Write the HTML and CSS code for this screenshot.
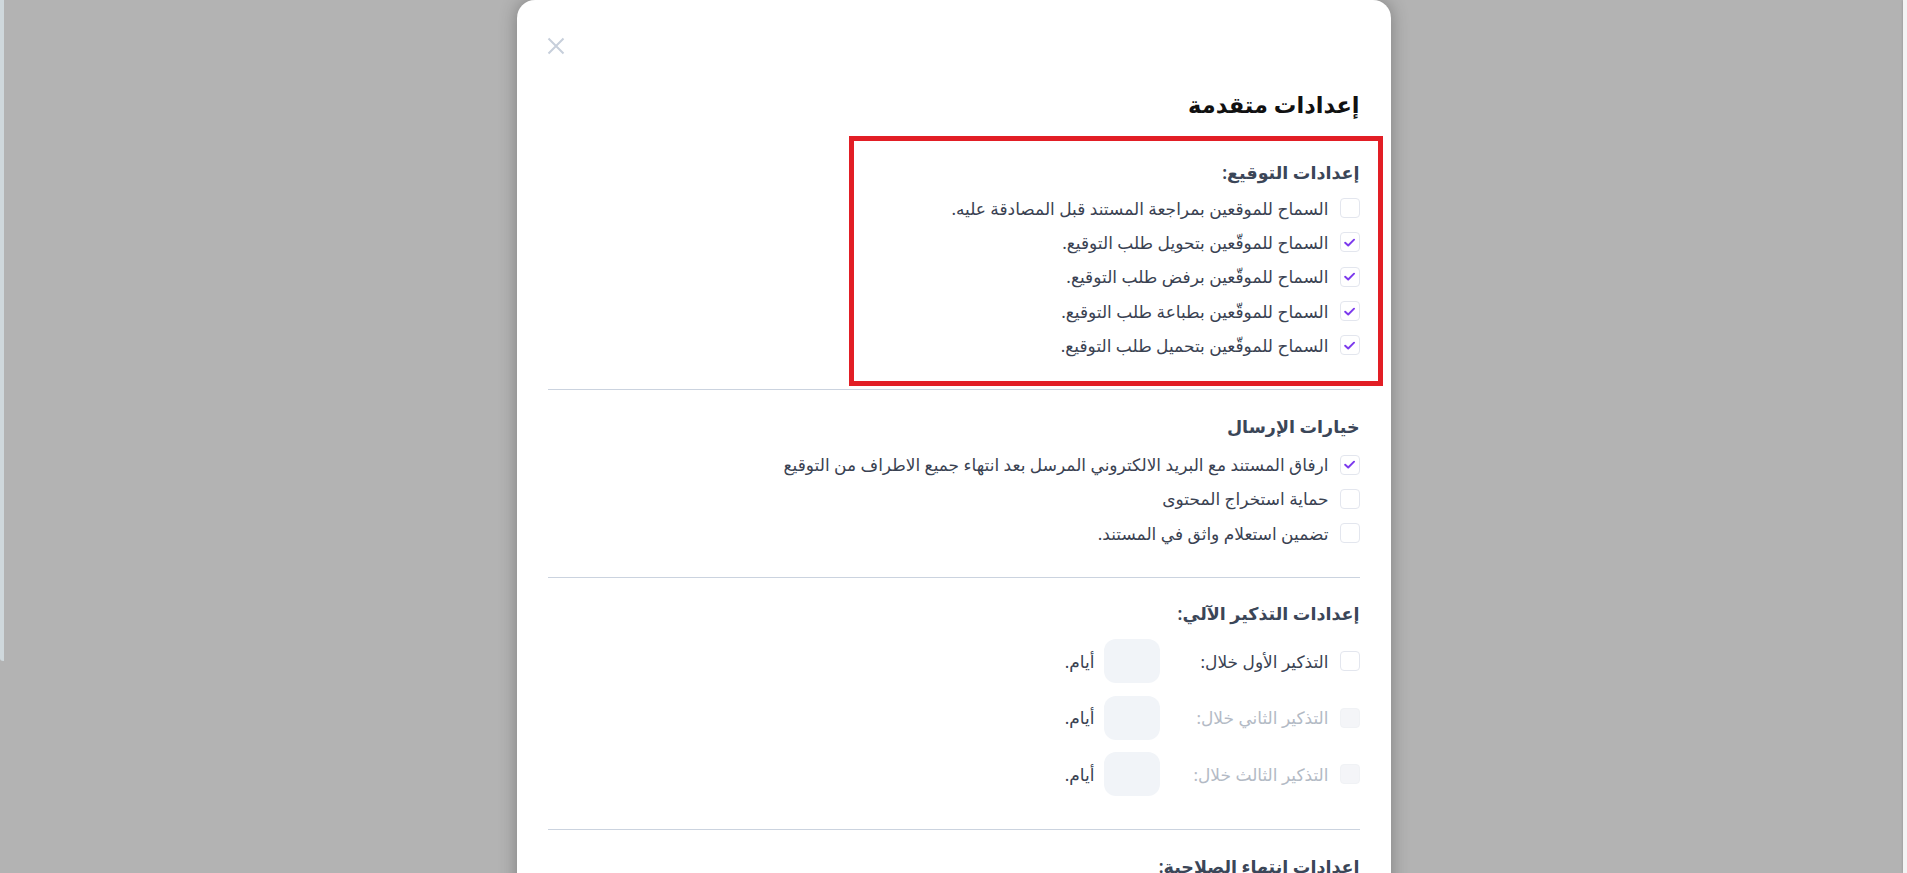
FILE: index.html
```html
<!DOCTYPE html>
<html lang="ar" dir="rtl">
<head>
  <meta charset="UTF-8" />
  <meta name="viewport" content="width=device-width, initial-scale=1.0"/>
  <title>إعدادات متقدمة</title>
  <link rel="stylesheet" href="styles.css">
</head>
<body>

<div class="backdrop">
  <div class="scroll-edge"></div>

  <div class="modal">
    <div class="modal-top">
      <button class="close" aria-label="إغلاق">
        <svg width="18" height="18" viewBox="0 0 18 18"><path d="M1.5 1.5l15 15M16.5 1.5l-15 15" stroke="#c7cfdb" stroke-width="2" fill="none"/></svg>
      </button>
    </div>
    <h1 class="modal-title">إعدادات متقدمة</h1>

    <section class="group highlighted">
      <h2>إعدادات التوقيع:</h2>
      <label class="row"><span class="box"></span>السماح للموقعين بمراجعة المستند قبل المصادقة عليه.</label>
      <label class="row"><span class="box checked"><svg viewBox="0 0 12 12"><path d="M2 6.2l2.8 2.6L10.2 3.4"/></svg></span>السماح للموقّعين بتحويل طلب التوقيع.</label>
      <label class="row"><span class="box checked"><svg viewBox="0 0 12 12"><path d="M2 6.2l2.8 2.6L10.2 3.4"/></svg></span>السماح للموقّعين برفض طلب التوقيع.</label>
      <label class="row"><span class="box checked"><svg viewBox="0 0 12 12"><path d="M2 6.2l2.8 2.6L10.2 3.4"/></svg></span>السماح للموقّعين بطباعة طلب التوقيع.</label>
      <label class="row"><span class="box checked"><svg viewBox="0 0 12 12"><path d="M2 6.2l2.8 2.6L10.2 3.4"/></svg></span>السماح للموقّعين بتحميل طلب التوقيع.</label>
    </section>

    <section class="group sending">
      <h2>خيارات الإرسال</h2>
      <label class="row"><span class="box checked"><svg viewBox="0 0 12 12"><path d="M2 6.2l2.8 2.6L10.2 3.4"/></svg></span>ارفاق المستند مع البريد الالكتروني المرسل بعد انتهاء جميع الاطراف من التوقيع</label>
      <label class="row"><span class="box"></span>حماية استخراج المحتوى</label>
      <label class="row"><span class="box"></span>تضمين استعلام واثق في المستند.</label>
    </section>

    <section class="group reminders">
      <h2>إعدادات التذكير الآلي:</h2>
      <div class="reminder">
        <span class="box"></span>
        <span class="reminder-label">التذكير الأول خلال:</span>
        <input class="days" type="text" />
        <span class="unit">أيام.</span>
      </div>
      <div class="reminder disabled">
        <span class="box"></span>
        <span class="reminder-label">التذكير الثاني خلال:</span>
        <input class="days" type="text" />
        <span class="unit">أيام.</span>
      </div>
      <div class="reminder disabled">
        <span class="box"></span>
        <span class="reminder-label">التذكير الثالث خلال:</span>
        <input class="days" type="text" />
        <span class="unit">أيام.</span>
      </div>
    </section>

    <section class="group last">
      <h2>إعدادات انتهاء الصلاحية:</h2>
    </section>
  </div>

  <div class="page-edge"></div>
</div>

</body>
</html>
```

FILE: styles.css
```css
body { margin: 0; height: 873px; overflow: hidden; background: #b3b3b3; font-family: 'Noto Sans', 'DejaVu Sans', sans-serif; color: #3a4252; }
.backdrop { display: flex; justify-content: space-between; align-items: flex-start; height: 873px; }
.page-edge { width: 4px; height: 661px; background: #cfd8dc; border-bottom-left-radius: 3px; }
.scroll-edge { width: 4px; height: 873px; background: #f3f3f3; box-shadow: 0 0 3px rgba(0,0,0,.2); }

.modal {
  width: 874px; box-sizing: border-box; padding: 0 31px; background: #fff; border-radius: 18px 18px 0 0;
  box-shadow: 0 0 18px rgba(0,0,0,.3); height: 900px;
}
.modal-top { display: flex; justify-content: flex-end; padding-top: 37px; height: 18px; }
.close { padding: 0; margin-left: -1px; border: none; background: none; width: 18px; height: 18px; cursor: pointer; }
.close svg { display: block; }
.modal-title { margin: 33px 0 14px; font-size: 22.5px; line-height: 34px; font-weight: 700; color: #111; }

.group { position: relative; padding: 22px 0 27px; border-bottom: 1px solid #cbd3df; }
.group h2 { margin: 0 0 5px; font-size: 17.5px; line-height: 28px; font-weight: 600; color: #3b4658; }
.highlighted::after {
  content: ""; position: absolute; top: 0; right: -23px; width: 534px; height: 250px;
  box-sizing: border-box; border: 5px solid #e21e25; pointer-events: none;
}
.sending h2 { margin-bottom: 7px; }
.group.last { border-bottom: none; }

.row { display: flex; align-items: center; gap: 11px; height: 34.3px; font-size: 17px; cursor: pointer; }
.box {
  flex: none; width: 20px; height: 20px; box-sizing: border-box; border: 1px solid #e3e6ee; border-radius: 4px;
  background: #fff; display: flex; align-items: center; justify-content: center;
}
.box svg { width: 13px; height: 13px; fill: none; stroke: #7c3aed; stroke-width: 1.8; stroke-linecap: round; stroke-linejoin: round; }

.reminders { padding-top: 21px; padding-bottom: 33px; }
.reminders h2 { margin-bottom: 12px; }
.reminder { display: flex; align-items: center; height: 44px; margin-bottom: 12.5px; font-size: 17px; }
.reminder:last-child { margin-bottom: 0; }
.reminder .box { margin-left: 11px; }
.reminder-label { width: 169px; }
.days { width: 56px; height: 44px; box-sizing: border-box; border: none; border-radius: 12px; background: #f1f4f8; margin: 0 0 0 9px; }
.unit { color: #3a4252; }
.reminder.disabled .box { background: #f4f5f8; border-color: #f0f2f5; }
.reminder.disabled .reminder-label { color: #b3bac5; }
```
